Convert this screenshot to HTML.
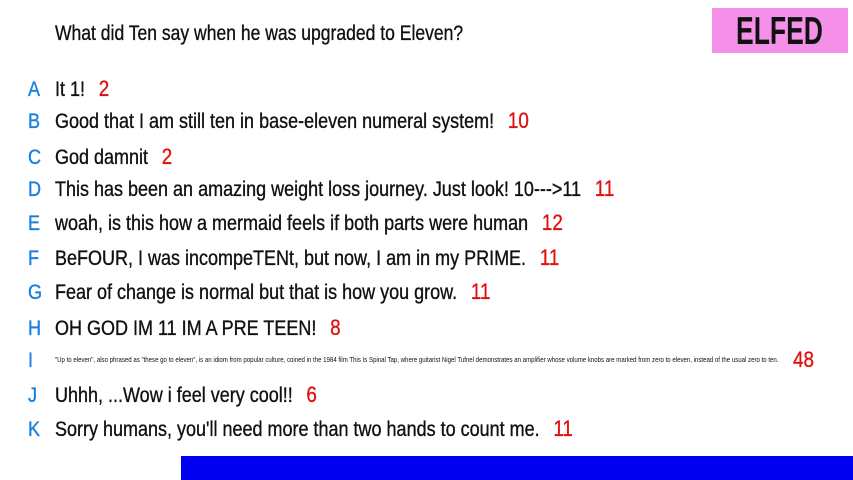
<!DOCTYPE html>
<html><head><style>
body{margin:0;width:853px;height:480px;background:#fff;position:relative;overflow:hidden;font-family:"Liberation Sans",sans-serif;color:#111}
.r{position:absolute;left:0;font-size:21px;line-height:24px;white-space:nowrap;width:853px;height:24px;-webkit-text-stroke:0.35px currentColor}
.l{position:absolute;left:28px;top:1px;color:#1a7ee0;transform:scaleX(0.86);transform-origin:left}
.t{position:absolute;left:55px;transform:scaleX(0.857);transform-origin:left}
.n{color:#e01010;margin-left:16px;font-size:22px}
</style></head><body>
<div class="r" style="top:22px"><span class="t" style="transform:scaleX(0.835)">What did Ten say when he was upgraded to Eleven?</span></div>
<div style="position:absolute;left:712px;top:8px;width:136px;height:45px;background:#f590e8;"><span style="position:absolute;left:24px;top:0;font-weight:bold;font-size:39px;line-height:47px;color:#111;transform:scaleX(0.68);transform-origin:left;white-space:nowrap">ELFED</span></div>
<div class="r" style="top:77px"><span class="l">A</span><span class="t">It 1!<span class="n">2</span></span></div>
<div class="r" style="top:109px"><span class="l">B</span><span class="t">Good that I am still ten in base-eleven numeral system!<span class="n">10</span></span></div>
<div class="r" style="top:145px"><span class="l">C</span><span class="t">God damnit<span class="n">2</span></span></div>
<div class="r" style="top:177px"><span class="l">D</span><span class="t">This has been an amazing weight loss journey. Just look! 10---&gt;11<span class="n">11</span></span></div>
<div class="r" style="top:211px"><span class="l">E</span><span class="t">woah, is this how a mermaid feels if both parts were human<span class="n">12</span></span></div>
<div class="r" style="top:246px"><span class="l">F</span><span class="t">BeFOUR, I was incompeTENt, but now, I am in my PRIME.<span class="n">11</span></span></div>
<div class="r" style="top:280px"><span class="l">G</span><span class="t">Fear of change is normal but that is how you grow.<span class="n">11</span></span></div>
<div class="r" style="top:316px"><span class="l">H</span><span class="t">OH GOD IM 11 IM A PRE TEEN!<span class="n">8</span></span></div>
<div class="r" style="top:348px"><span class="l">I</span><span class="t" style="font-size:7.1px;top:8px;line-height:8px;-webkit-text-stroke:0">"Up to eleven", also phrased as "these go to eleven", is an idiom from popular culture, coined in the 1984 film This Is Spinal Tap, where guitarist Nigel Tufnel demonstrates an amplifier whose volume knobs are marked from zero to eleven, instead of the usual zero to ten.</span><span style="position:absolute;left:793px;color:#e01010;font-size:22px;transform:scaleX(0.86);transform-origin:left">48</span></div>
<div class="r" style="top:383px"><span class="l">J</span><span class="t">Uhhh, ...Wow i feel very cool!!<span class="n">6</span></span></div>
<div class="r" style="top:417px"><span class="l">K</span><span class="t">Sorry humans, you'll need more than two hands to count me.<span class="n">11</span></span></div>
<div style="position:absolute;left:181px;top:456px;width:672px;height:24px;background:#0000f0"></div>
</body></html>
